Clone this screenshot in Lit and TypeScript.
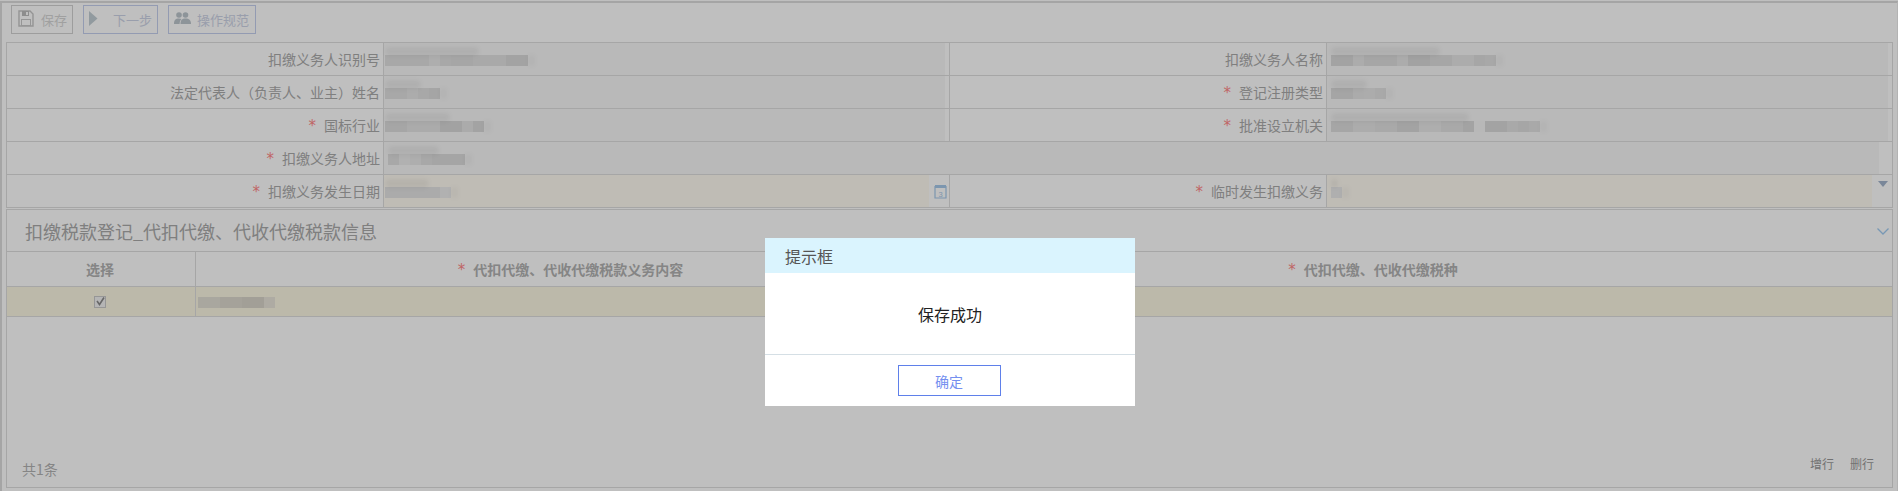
import { LitElement, html, css } from "lit";
import { customElement } from "lit/decorators.js";

const mosaic = (shades: number[], warm = false) => html`<span class="mosaic">${shades.map((s) => {
  const bg = warm ? `rgb(${s},${s - 3},${s - 14})` : `rgb(${s},${s},${s})`;
  return html`<i class="block" style="background:${bg}"></i>`;
})}</span>`;

const label = (text: string, req = false) => html`<div class="label">${req ? html`<span class="star">*</span>` : ""}<span>${text}</span></div>`;

@customElement("app-root")
export class AppRoot extends LitElement {
  static styles = css`
    :host { display: block; position: relative; width: 1898px; height: 491px; overflow: hidden; background: #fff; color: #aaa; font-family: "Noto Sans CJK SC", "Liberation Sans", sans-serif; font-size: 14px; }
    * { box-sizing: border-box; }
    .frame { height: 490px; margin-top: 1px; border-top: 2px solid #dcdcdc; border-left: 2px solid #dcdcdc; border-right: 1px solid #efefef; padding: 2px 4px 3px 4px; display: flex; flex-direction: column; }
    .toolbar { display: flex; height: 29px; padding-left: 5px; gap: 10px; font-size: 13px; margin-bottom: 8px; flex: none; }
    .btn { height: 29px; display: flex; align-items: center; border: 1px solid #d2d2d2; background: #fff; color: #d6d6d6; }
    .btn.blue { border-color: #c4cfee; color: #cdd3e6; }
    .b1 { width: 62px; padding-left: 6px; gap: 7px; }
    .b2 { width: 75px; padding-left: 5px; gap: 15px; }
    .b3 { width: 88px; padding-left: 5px; gap: 6px; }
    .btn svg { display: block; flex: none; margin-top: -3px; }
    .form { width: 1887px; border: 1px solid #dedede; border-bottom: none; flex: none; }
    .row { display: grid; grid-template-columns: 377px 566px 377px 565px; height: 33px; }
    .row.wide { grid-template-columns: 377px 1fr; }
    .row > * { border-bottom: 1px solid #dedede; min-width: 0; }
    .label { display: flex; align-items: center; justify-content: flex-end; padding-right: 3px; border-right: 1px solid #dedede; white-space: nowrap; }
    .star { color: #f88; font-family: "DejaVu Sans", sans-serif; font-size: 15px; margin-right: 8px; line-height: 1; position: relative; top: 1px; }
    .val { display: flex; align-items: stretch; border-right: 1px solid #dedede; padding-right: 4px; background: #fff; }
    .val.last { border-right: none; }
    .fill { flex: 1; display: flex; align-items: center; padding: 3px 0 0 1px; background: #f7f7f7; min-width: 0; }
    .val.last .fill { padding-left: 4px; }
    .val.date { padding-right: 0; }
    .fill.y { background: #fffbf2; }
    .side { display: flex; justify-content: center; flex: none; }
    .side.cal { width: 20px; align-items: center; padding-left: 2px; }
    .side.drop { width: 20px; align-items: flex-start; padding-top: 6px; padding-left: 2px; }
    .wideval { padding-right: 13px; }
    .mosaic { display: flex; position: relative; }
    .mosaic::before { content: ""; position: absolute; left: 0; top: -8px; width: 66%; height: 9px; background: rgba(0,0,0,.05); filter: blur(2px); border-radius: 6px; }
    .mosaic::after { content: ""; position: absolute; left: 100%; top: 0; width: 7px; height: 11px; background: rgba(0,0,0,.03); filter: blur(2px); }
    .block { display: block; width: 11px; height: 11px; flex: none; }
    .section { margin-top: 1px; width: 1887px; flex: 1; border: 1px solid #dedede; display: flex; flex-direction: column; min-height: 0; }
    .head { height: 42px; flex: none; border-bottom: 1px solid #dedede; display: flex; align-items: center; justify-content: space-between; padding: 1px 3px 0 18px; font-size: 18px; color: #aaa; }
    .grid { display: grid; grid-template-columns: 189px 749px 1fr 91px; flex: none; }
    .th { height: 35px; border-bottom: 1px solid #dedede; display: flex; align-items: center; justify-content: center; font-weight: 700; color: #b2b2b2; white-space: nowrap; }
    .th .star { font-weight: 400; }
    .sel { border-right: 1px solid #dedede; padding-right: 2px; }
    .td { height: 30px; border-bottom: 1px solid #dedede; background: #fbf7e3; display: flex; align-items: center; }
    .td.check { justify-content: center; border-right: 1px solid #dedede; padding-right: 2px; }
    .td.txt { padding: 1px 0 0 2px; }
    .td.txt .mosaic::before, .td.txt .mosaic::after { display: none; }
    .box { width: 12px; height: 12px; background: #f2f2f2; border: 1px solid #c8c8c8; display: flex; align-items: center; justify-content: center; }
    .foot { margin-top: auto; display: flex; justify-content: space-between; align-items: flex-end; padding: 0 18px 0 15px; }
    .total { padding-bottom: 8px; line-height: 20px; color: #b2b2b2; }
    .ops { display: flex; gap: 16px; padding-bottom: 14px; line-height: 18px; font-size: 12px; color: #999; }
    .mask { position: absolute; inset: 0; background: rgba(0,0,0,.25); }
    .modal { position: absolute; left: 765px; top: 238px; width: 370px; height: 168px; background: #fff; display: flex; flex-direction: column; }
    .m-head { height: 35px; flex: none; background: #daf4fe; color: #555; font-size: 16px; display: flex; align-items: center; padding-left: 20px; }
    .m-body { height: 82px; flex: none; border-bottom: 1px solid #d5dfe5; color: #222; font-size: 16px; display: flex; align-items: center; justify-content: center; }
    .m-foot { flex: 1; display: flex; justify-content: center; padding-top: 10px; padding-right: 2px; }
    .ok { width: 103px; height: 31px; border: 1px solid #5f80ea; color: #7590f0; font-size: 14px; display: flex; align-items: center; justify-content: center; background: #fff; }
  `;

  render() {
    const floppy = html`<svg width="16" height="17" viewBox="0 0 16 17"><path fill="none" stroke="#c6c6c6" stroke-width="1.4" d="M1 1h11l3 3v12H1z"/><path fill="#bdbdbd" d="M4 1h7v5H4z"/><path fill="#fff" d="M8 2h2v3H8z"/><path fill="#c8c8c8" d="M3 9h10v7H3z"/><path fill="#fff" d="M4 10h8v5H4z"/></svg>`;
    const play = html`<svg width="9" height="15" viewBox="0 0 9 15"><path fill="#c2ced4" d="M0 0l8.500 7.500L0 15z"/></svg>`;
    const users = html`<svg width="17" height="12" viewBox="0 0 17 12"><g fill="#bdc6cd"><circle cx="11.500" cy="3" r="2.800"/><path d="M6.500 12c0-4 1.500-5.500 5-5.500s5.500 1.500 5.500 5.500z"/><circle cx="5" cy="3" r="2.800"/><path d="M0 12c0-4 1.500-5.500 4.800-5.500 1.200 0 2 .2 2.700.6C6.300 8.200 5.700 9.800 5.600 12z"/></g></svg>`;
    const cal = html`<svg width="13" height="15" viewBox="0 0 13 15"><path fill="none" stroke="#a6c8ea" stroke-width="1.200" d="M1 2.500h11v11.500H1z"/><path fill="#a6c8ea" d="M1 1h11v3H1z"/><text x="6.500" y="12.500" font-size="7.500" text-anchor="middle" fill="#a6c8ea" font-family="Liberation Sans">3</text></svg>`;
    const tri = html`<svg width="10" height="6" viewBox="0 0 10 6"><path fill="#a3b4cc" d="M0 0h10L5 6z"/></svg>`;
    const chev = html`<svg width="12" height="7" viewBox="0 0 12 7"><path fill="none" stroke="#a0cbf0" stroke-width="1.300" d="M.5.500L6 6l5.500-5.500"/></svg>`;
    const tick = html`<svg width="9" height="9" viewBox="0 0 9 9"><path fill="none" stroke="#8a8a8a" stroke-width="1.600" d="M1 4l2.500 3.500L8 .5"/></svg>`;
    return html`
      <div class="frame">
        <div class="toolbar">
          <div class="btn b1">${floppy}<span>保存</span></div>
          <div class="btn blue b2">${play}<span>下一步</span></div>
          <div class="btn blue b3">${users}<span>操作规范</span></div>
        </div>
        <div class="form">
          <div class="row">
            ${label("扣缴义务人识别号")}
            <div class="val"><div class="fill">${mosaic([224,224,224,224,232,224,222,222,226,226,226,218,218])}</div></div>
            ${label("扣缴义务人名称")}
            <div class="val last"><div class="fill">${mosaic([218,218,230,222,222,222,230,216,216,222,222,230,230,222,224])}</div></div>
          </div>
          <div class="row">
            ${label("法定代表人（负责人、业主）姓名")}
            <div class="val"><div class="fill">${mosaic([224,224,230,224,220])}</div></div>
            ${label("登记注册类型", true)}
            <div class="val last"><div class="fill">${mosaic([220,220,228,230,226])}</div></div>
          </div>
          <div class="row">
            ${label("国标行业", true)}
            <div class="val"><div class="fill">${mosaic([222,222,228,228,228,216,216,228,218])}</div></div>
            ${label("批准设立机关", true)}
            <div class="val last"><div class="fill">${mosaic([222,222,230,230,226,226,218,218,232,232,226,226,218,246,218,218,226,222,226])}</div></div>
          </div>
          <div class="row wide">
            ${label("扣缴义务人地址", true)}
            <div class="val last wideval"><div class="fill">${mosaic([224,236,232,224,220,220,220])}</div></div>
          </div>
          <div class="row">
            ${label("扣缴义务发生日期", true)}
            <div class="val date"><div class="fill y">${mosaic([228,228,228,228,228,236])}</div><div class="side cal">${cal}</div></div>
            ${label("临时发生扣缴义务", true)}
            <div class="val last date"><div class="fill y">${mosaic([234])}</div><div class="side drop">${tri}</div></div>
          </div>
        </div>
        <div class="section">
          <div class="head"><span>扣缴税款登记_代扣代缴、代收代缴税款信息</span>${chev}</div>
          <div class="grid">
            <div class="th sel">选择</div>
            <div class="th"><span class="star">*</span>代扣代缴、代收代缴税款义务内容</div>
            <div class="th"><span class="star">*</span>代扣代缴、代收代缴税种</div>
            <div class="th"></div>
            <div class="td check"><span class="box">${tick}</span></div>
            <div class="td txt">${mosaic([226,226,220,220,216,216,232], true)}</div>
            <div class="td"></div>
            <div class="td"></div>
          </div>
          <div class="foot">
            <span class="total">共1条</span>
            <div class="ops"><span>增行</span><span>删行</span></div>
          </div>
        </div>
      </div>
      <div class="mask"></div>
      <div class="modal">
        <div class="m-head">提示框</div>
        <div class="m-body">保存成功</div>
        <div class="m-foot"><div class="ok">确定</div></div>
      </div>
    `;
  }
}
